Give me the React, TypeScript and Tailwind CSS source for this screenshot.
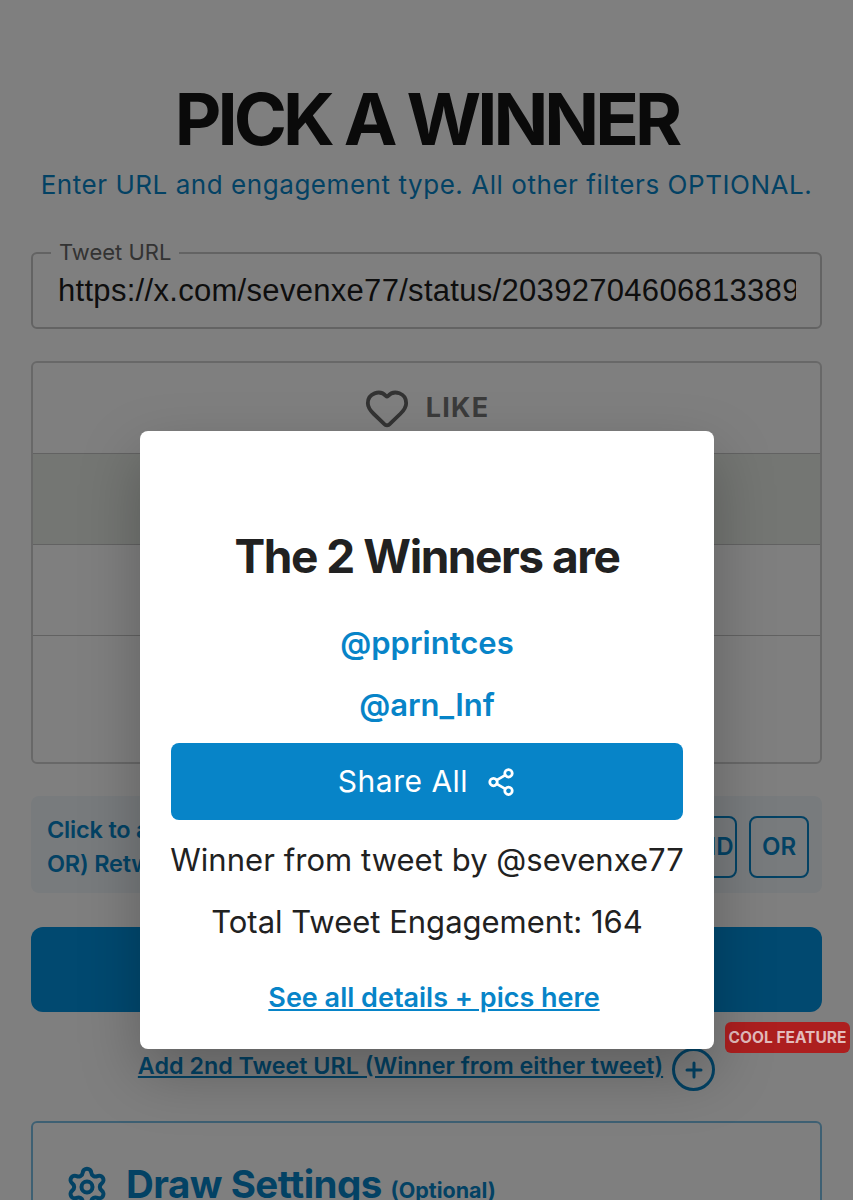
import { Heart, Plus, Settings, Share2 } from 'lucide-react';

function OptionRow({ selected, className }: { selected?: boolean; className: string }) {
  return <div className={`border-t border-[#c4c4c4] ${selected ? 'bg-[#e9ece6]' : ''} ${className}`} />;
}

export default function App() {
  return (
    <div className="relative h-[1200px] w-[853px] overflow-hidden bg-white font-['Inter',sans-serif]">
      {/* Page behind the dialog */}
      <div className="flex flex-col px-[31px] pt-[78px]">
        <h1 className="text-center text-[72px] leading-[82px] font-bold tracking-[-4px] whitespace-nowrap text-[#141414]">PICK A WINNER</h1>
        <p className="mt-[7px] text-center text-[26px] leading-[36px] tracking-[0.55px] whitespace-nowrap text-[#0784c8]">
          Enter URL and engagement type. All other filters OPTIONAL.
        </p>

        <div className="relative mt-[49px] flex h-[77px] items-center rounded-[6px] border-2 border-[#c6c6c6] pr-[24px] pl-[25px]">
          <span className="absolute top-[-15px] left-[18px] bg-white px-[8px] text-[22px] leading-[27px] text-[#666666]">Tweet URL</span>
          <div className="w-full overflow-hidden font-['Liberation_Sans',sans-serif] text-[31px] leading-[36px] tracking-[0.3px] whitespace-nowrap text-[#1c1c1c]">
            https://x.com/sevenxe77/status/2039270460681338900
          </div>
        </div>

        <div className="mt-[32px] flex h-[403px] flex-col rounded-[6px] border-2 border-[#d0d0d0]">
          <div className="flex h-[90px] items-center justify-center gap-[16px]">
            <Heart className="h-[46px] w-[46px] text-[#666666]" strokeWidth={2} />
            <span className="text-[27px] font-bold tracking-[1.2px] text-[#777777]">LIKE</span>
          </div>
          <OptionRow selected className="h-[91px]" />
          <OptionRow className="h-[91px]" />
          <OptionRow className="flex-1" />
        </div>

        <div className="mt-[32px] flex h-[97px] items-center justify-between rounded-[8px] bg-[#f0f6fa] pr-[13px] pl-[16px]">
          <div className="pt-[4px] text-[23.5px] leading-[34px] font-semibold tracking-[-0.2px] whitespace-nowrap text-[#0784c8]">
            <div>Click to add</div>
            <div>OR) Retweet</div>
          </div>
          <div className="flex gap-[12px] pt-[4px]">
            <div className="flex h-[62px] w-[60px] items-center justify-center rounded-[8px] border-2 border-[#0784c8] text-[24px] font-semibold text-[#0784c8]">
              AND
            </div>
            <div className="flex h-[62px] w-[60px] items-center justify-center rounded-[8px] border-2 border-[#0784c8] text-[24px] font-semibold text-[#0784c8]">
              OR
            </div>
          </div>
        </div>

        <div className="mt-[34px] h-[85px] rounded-[12px] bg-[#0392e0]" />

        <div className="mt-[28px] flex items-center justify-center gap-[9px]">
          <span className="text-[23.3px] leading-[36px] font-semibold whitespace-nowrap text-[#0784c8] underline">
            Add 2nd Tweet URL (Winner from either tweet)
          </span>
          <span className="mt-[8px] flex h-[43px] w-[43px] items-center justify-center rounded-full border-[3px] border-[#0784c8]">
            <Plus className="h-[24px] w-[24px] text-[#0784c8]" strokeWidth={3} />
          </span>
        </div>

        <div className="mt-[30px] h-[200px] rounded-[6px] border-2 border-[#7cc0e6] pt-[38px] pl-[32px]">
          <div className="flex items-center gap-[17px] text-[#0784c8]">
            <Settings className="h-[44px] w-[44px] shrink-0" strokeWidth={2.2} />
            <span className="text-[38.5px] leading-[46px] font-bold tracking-[-0.5px] whitespace-nowrap">
              Draw Settings <span className="text-[21.5px] font-bold tracking-normal">(Optional)</span>
            </span>
          </div>
        </div>
      </div>

      {/* Backdrop */}
      <div className="absolute inset-0 bg-black/50" />

      <div className="absolute top-[1022px] left-[725px] flex h-[31px] w-[125px] items-center justify-center rounded-[6px] bg-[#ad1f1f] text-[15.5px] font-bold whitespace-nowrap text-[#e3bcbc]">
        COOL FEATURE
      </div>

      {/* Dialog */}
      <div className="absolute top-[431px] left-[140px] flex h-[618px] w-[574px] flex-col items-center rounded-[8px] bg-white px-[31px] pt-[96px] text-center shadow-[0_24px_60px_rgba(0,0,0,0.25)]">
        <h2 className="text-[46px] leading-[58px] font-bold tracking-[-1.44px] whitespace-nowrap text-[#212121]">The 2 Winners are</h2>
        <div className="mt-[38px] text-[31px] leading-[40px] font-semibold text-[#0784c8]">@pprintces</div>
        <div className="mt-[22px] text-[31px] leading-[40px] font-semibold text-[#0784c8]">@arn_Inf</div>
        <div className="mt-[18px] flex h-[77px] w-full items-center justify-center gap-[18px] rounded-[8px] bg-[#0784c8] text-[30px] text-white">
          <span className="tracking-[0.5px]">Share All</span>
          <Share2 className="h-[30px] w-[30px]" strokeWidth={2.2} />
        </div>
        <div className="mt-[20px] text-[31px] leading-[40px] tracking-[0.05px] whitespace-nowrap text-[#212121]">Winner from tweet by @sevenxe77</div>
        <div className="mt-[22px] text-[31px] leading-[40px] whitespace-nowrap text-[#212121]">Total Tweet Engagement: 164</div>
        <div className="mt-[38px] ml-[14px] text-[27px] leading-[36px] font-semibold whitespace-nowrap text-[#0784c8] underline">
          See all details + pics here
        </div>
      </div>
    </div>
  );
}
